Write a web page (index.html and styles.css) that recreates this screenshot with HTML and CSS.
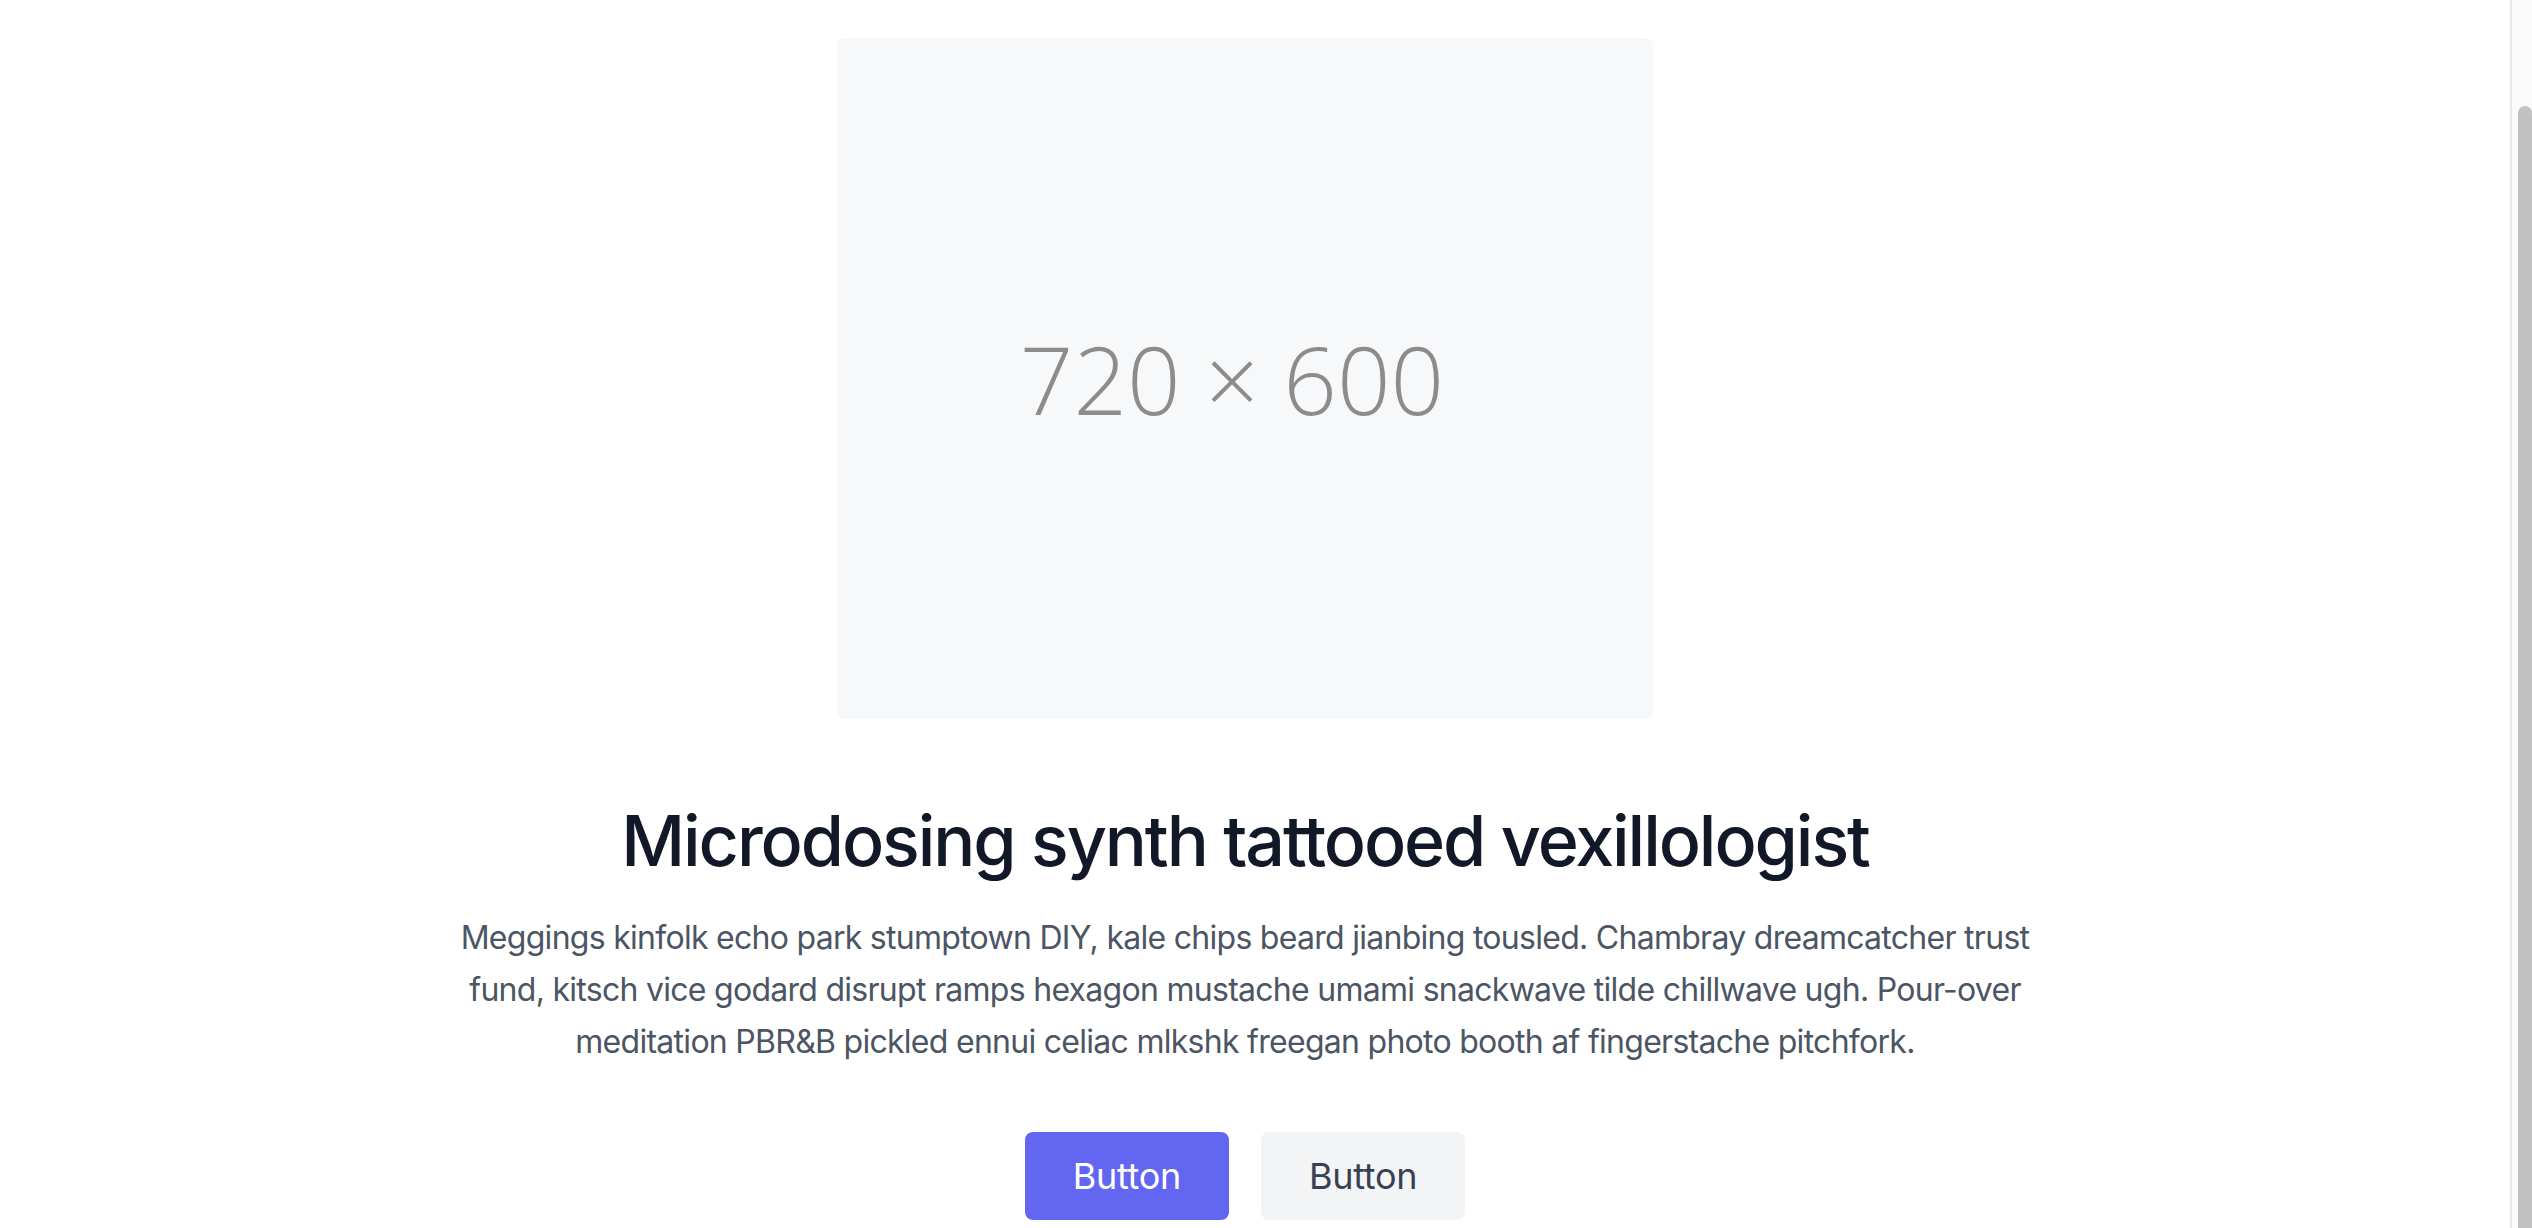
FILE: index.html
```html
<!DOCTYPE html>
<html lang="en">
<head>
<meta charset="utf-8">
<title>Hero</title>
<link rel="stylesheet" href="styles.css">
</head>
<body>
<div class="page">
  <main class="content">
    <section class="hero">
      <div class="placeholder"><span class="placeholder-text">720 × 600</span></div>
      <h1 class="title">Microdosing synth tattooed vexillologist</h1>
      <p class="lead">Meggings kinfolk echo park stumptown DIY, kale chips beard jianbing tousled. Chambray dreamcatcher trust fund, kitsch vice godard disrupt ramps hexagon mustache umami snackwave tilde chillwave ugh. Pour-over meditation PBR&amp;B pickled ennui celiac mlkshk freegan photo booth af fingerstache pitchfork.</p>
      <div class="actions">
        <button class="btn btn-primary">Button</button>
        <button class="btn btn-secondary">Button</button>
      </div>
    </section>
  </main>
  <div class="scrollbar"><div class="thumb"></div></div>
</div>
</body>
</html>
```

FILE: styles.css
```css
html, body {
  margin: 0;
  padding: 0;
  background: #ffffff;
}

body {
  font-family: Inter, "Noto Sans", "Liberation Sans", sans-serif;
}

.page {
  display: flex;
  height: 1228px;
  overflow: hidden;
}

.content {
  flex: 1;
  padding-right: 20px;
}

.hero {
  display: flex;
  flex-direction: column;
  align-items: center;
  padding-top: 38px;
}

.placeholder {
  width: 816px;
  height: 681px;
  background: #f7f8fa;
  border-radius: 8px;
  display: flex;
  align-items: center;
  justify-content: center;
  margin-bottom: 82px;
}

.placeholder-text {
  font-family: "Open Sans", "Noto Sans", sans-serif;
  font-weight: 300;
  font-size: 94px;
  color: #8c8c8c;
  line-height: 1;
  margin-right: 26px;
}

.title {
  margin: 0 0 30px;
  font-size: 70px;
  line-height: 80px;
  font-weight: 500;
  color: #111827;
  letter-spacing: -2.1px;
  text-align: center;
}

.lead {
  margin: 0 0 64px;
  width: 1632px;
  font-size: 32px;
  line-height: 52px;
  padding-top: 1px;
  color: #4b5563;
  text-align: center;
  letter-spacing: -0.72px;
}

.actions {
  display: flex;
  gap: 32px;
}

.btn {
  font-family: Inter, "Noto Sans", sans-serif;
  font-size: 36px;
  line-height: 56px;
  padding: 16px 48px;
  border: 0;
  border-radius: 8px;
  letter-spacing: -0.3px;
}

.btn-primary {
  background: #6366f1;
  color: #ffffff;
}

.btn-secondary {
  background: #f3f4f6;
  color: #374151;
}

.scrollbar {
  width: 20px;
  border-left: 2px solid #e8e8e8;
  background: #fafafa;
  padding-top: 106px;
  display: flex;
  justify-content: flex-end;
}

.thumb {
  width: 14px;
  height: 100%;
  background: #c1c1c1;
  border-radius: 7px 7px 0 0;
}
```
